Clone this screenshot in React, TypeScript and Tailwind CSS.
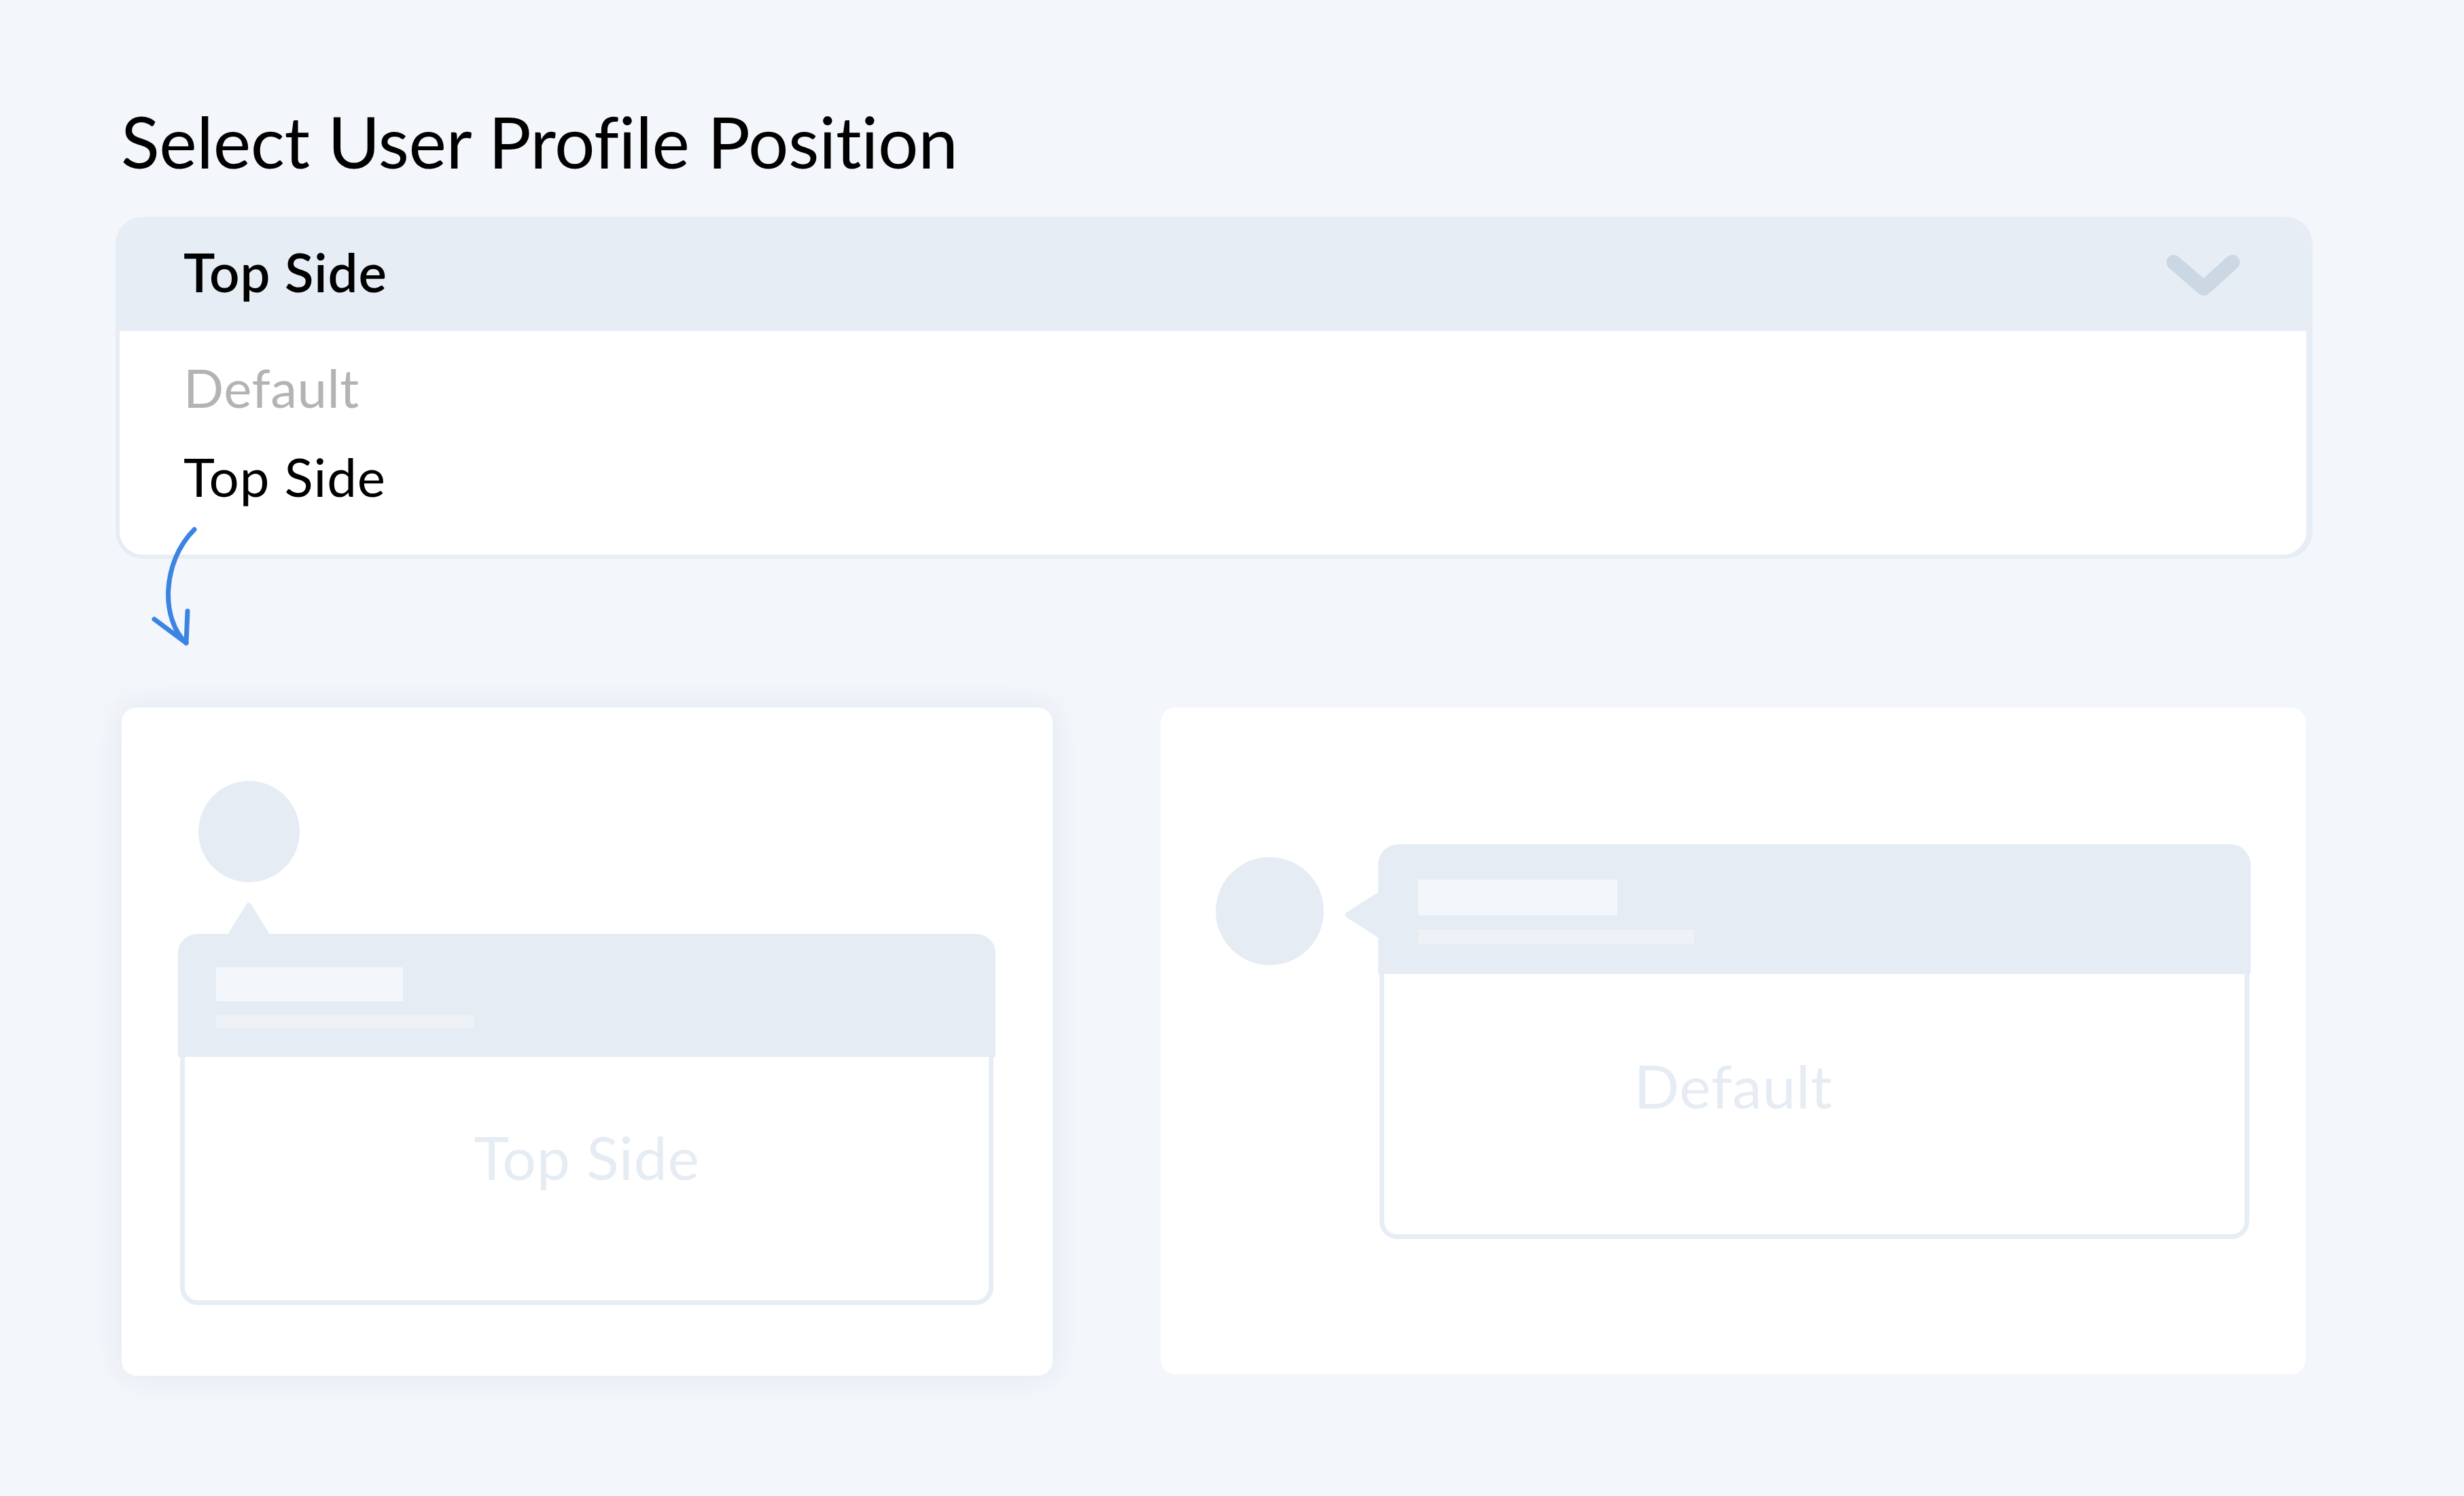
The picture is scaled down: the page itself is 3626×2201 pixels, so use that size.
import React from "react";

export default function App() {
  return (
    <div className="relative w-[3626px] h-[2201px] bg-[#f3f6fa] font-['Lato',sans-serif] pt-[155px] pl-[170px]">
      <h1 className="text-[105px] leading-none text-black ml-[8px] font-normal tracking-[-0.4px]">
        Select User Profile Position
      </h1>

      <div className="mt-[59px] w-[3233px] rounded-[40px] bg-[#e6edf5] flex flex-col">
        <div className="h-[168px] flex justify-between items-start">
          <div className="pl-[100px] pt-[42px] text-[78px] leading-none font-semibold text-black tracking-[1px]">
            Top Side
          </div>
          <svg
            width="120"
            height="80"
            viewBox="0 0 120 80"
            className="mt-[47px] mr-[101px]"
          >
            <polyline
              points="17,20 61,58 103,20"
              fill="none"
              stroke="#cbd8e4"
              strokeWidth="22"
              strokeLinecap="round"
              strokeLinejoin="round"
            />
          </svg>
        </div>
        <div className="ml-[6px] mr-[9px] mb-[6px] rounded-b-[34px] bg-white h-[329px] pt-[44px] pl-[94px] flex flex-col gap-[53px]">
          <div className="text-[78px] leading-none text-[#b3b3b3] tracking-[0.5px]">Default</div>
          <div className="text-[78px] leading-none text-black tracking-[1px]">Top Side</div>
        </div>
      </div>

      <svg
        width="80"
        height="190"
        viewBox="0 0 80 190"
        className="absolute left-[215px] top-[770px]"
      >
        <path
          d="M71 9 C22 58, 22 142, 59 176"
          fill="none"
          stroke="#3b84e4"
          strokeWidth="7"
          strokeLinecap="round"
        />
        <path
          d="M12 141 L59 176 L61 129"
          fill="none"
          stroke="#3b84e4"
          strokeWidth="7"
          strokeLinecap="round"
          strokeLinejoin="round"
        />
      </svg>

      <div className="mt-[219px] ml-[9px] flex items-start gap-[159px]">
        {/* Left card: Top Side */}
        <div className="w-[1370px] h-[983px] bg-white rounded-[22px] shadow-[0_0_40px_rgba(190,205,225,0.35)] pt-[108px] pl-[83px] flex flex-col">
          <div className="w-[149px] h-[149px] rounded-full bg-[#e6ecf4] ml-[30px]" />
          <div className="relative mt-[76px] w-[1203px]">
            <svg
              width="62"
              height="48"
              viewBox="0 0 62 48"
              className="absolute left-[73px] top-[-47px]"
            >
              <path d="M0 48 L27 4 Q31 -2 35 4 L62 48 Z" fill="#e6ecf4" />
            </svg>
            <div className="h-[181px] rounded-t-[28px] bg-[#e6ecf4] pt-[49px] pl-[56px] flex flex-col gap-[20px]">
              <div className="w-[275px] h-[50px] bg-[#f3f6fa]" />
              <div className="w-[380px] h-[20px] bg-[#eef2f7]" />
            </div>
            <div className="mx-[3px] h-[365px] border-[7px] border-t-0 border-[#e6edf5] rounded-b-[26px] bg-white text-center pt-[103px] text-[88px] leading-none text-[#e6ecf4] tracking-[0.6px]">
              Top Side
            </div>
          </div>
        </div>

        {/* Right card: Default */}
        <div className="w-[1685px] h-[981px] bg-white rounded-[22px] pt-[201px] pl-[81px] flex items-start">
          <div className="w-[159px] h-[159px] rounded-full bg-[#e6ecf4] mt-[19px] shrink-0" />
          <div className="relative ml-[80px] w-[1284px] shrink-0">
            <svg
              width="51"
              height="68"
              viewBox="0 0 51 68"
              className="absolute left-[-50px] top-[70px]"
            >
              <path d="M51 0 L4 30 Q-1 34 4 38 L51 68 Z" fill="#e6ecf4" />
            </svg>
            <div className="h-[191px] rounded-t-[30px] bg-[#e6ecf4] pt-[52px] pl-[59px] flex flex-col gap-[21px]">
              <div className="w-[293px] h-[53px] bg-[#f3f6fa]" />
              <div className="w-[406px] h-[21px] bg-[#eef2f7]" />
            </div>
            <div className="mx-[2px] h-[390px] border-[7px] border-t-0 border-[#e6edf5] rounded-b-[26px] bg-white text-center pt-[120px] pr-[239px] text-[88px] leading-none text-[#e6ecf4] tracking-[0.6px]">
              Default
            </div>
          </div>
        </div>
      </div>
    </div>
  );
}
